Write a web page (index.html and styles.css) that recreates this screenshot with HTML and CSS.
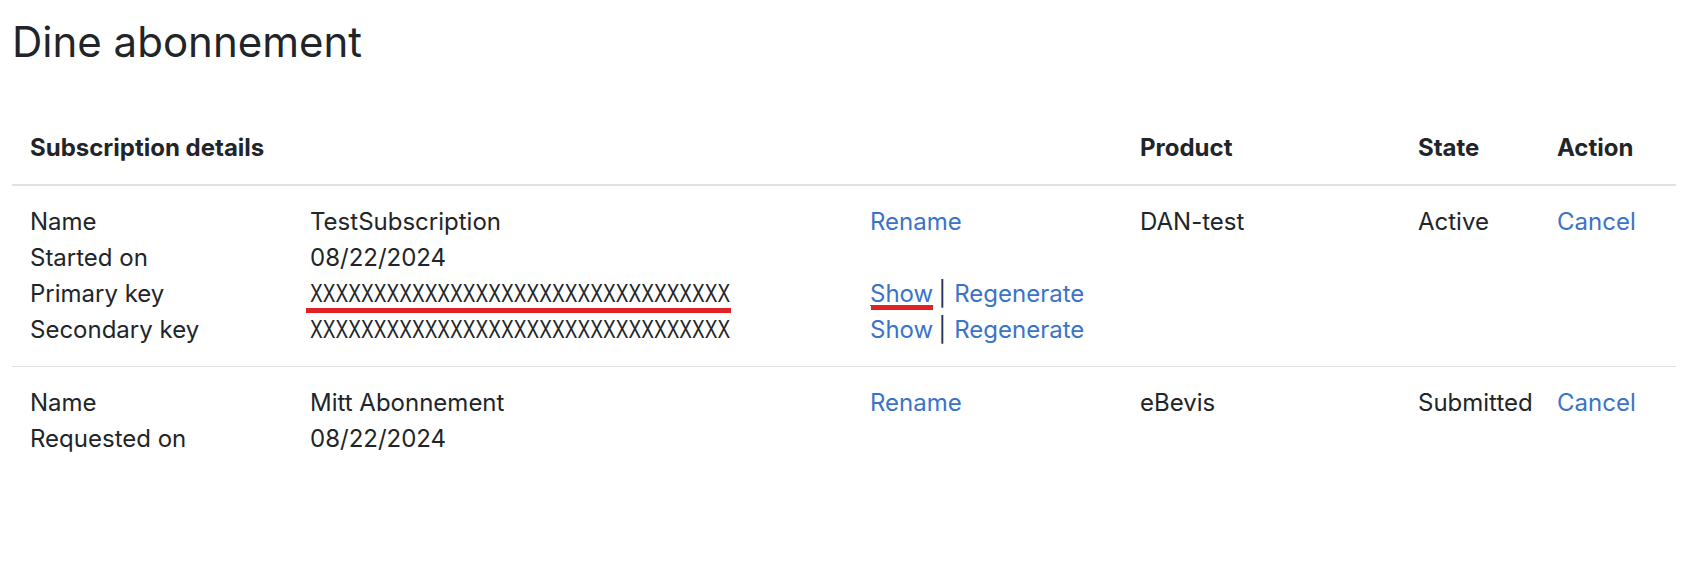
FILE: index.html
```html
<!DOCTYPE html>
<html lang="no">
<head>
<meta charset="utf-8">
<title>Dine abonnement</title>
<link rel="stylesheet" href="styles.css">
</head>
<body>
<main class="page">
  <h1 class="title">Dine abonnement</h1>
  <table class="subs">
    <colgroup>
      <col class="c-label">
      <col class="c-value">
      <col class="c-links">
      <col class="c-product">
      <col class="c-state">
      <col class="c-action">
    </colgroup>
    <thead>
      <tr>
        <th colspan="3">Subscription details</th>
        <th>Product</th>
        <th>State</th>
        <th>Action</th>
      </tr>
    </thead>
    <tbody>
      <tr>
        <td>
          <div class="line">Name</div>
          <div class="line">Started on</div>
          <div class="line">Primary key</div>
          <div class="line">Secondary key</div>
        </td>
        <td>
          <div class="line">TestSubscription</div>
          <div class="line">08/22/2024</div>
          <div class="line"><span class="key-wrap marked"><span class="key">XXXXXXXXXXXXXXXXXXXXXXXXXXXXXXXXX</span></span></div>
          <div class="line"><span class="key-wrap"><span class="key">XXXXXXXXXXXXXXXXXXXXXXXXXXXXXXXXX</span></span></div>
        </td>
        <td>
          <div class="line"><a class="link" href="#">Rename</a></div>
          <div class="line">&nbsp;</div>
          <div class="line"><a class="link hover marked-link" href="#">Show</a><span class="sep">|</span><a class="link" href="#">Regenerate</a></div>
          <div class="line"><a class="link" href="#">Show</a><span class="sep">|</span><a class="link" href="#">Regenerate</a></div>
        </td>
        <td><div class="line">DAN-test</div></td>
        <td><div class="line">Active</div></td>
        <td><div class="line"><a class="link" href="#">Cancel</a></div></td>
      </tr>
      <tr>
        <td>
          <div class="line">Name</div>
          <div class="line">Requested on</div>
        </td>
        <td>
          <div class="line">Mitt Abonnement</div>
          <div class="line">08/22/2024</div>
        </td>
        <td><div class="line"><a class="link" href="#">Rename</a></div></td>
        <td><div class="line">eBevis</div></td>
        <td><div class="line">Submitted</div></td>
        <td><div class="line"><a class="link" href="#">Cancel</a></div></td>
      </tr>
    </tbody>
  </table>
</main>
</body>
</html>
```

FILE: styles.css
```css
html, body {
  margin: 0;
  padding: 0;
  background: #ffffff;
}

body {
  font-family: Inter, "Noto Sans", "Liberation Sans", sans-serif;
  font-size: 24px;
  line-height: 36px;
  color: #212529;
}

.page {
  padding: 18px 25px 0 12px;
}

.title {
  margin: 0 0 46px 0;
  font-size: 42px;
  font-weight: 400;
  line-height: 48px;
  color: #212529;
}

.subs {
  width: 1664px;
  border-collapse: collapse;
  table-layout: fixed;
}

.c-label { width: 280px; }
.c-value { width: 560px; }
.c-links { width: 270px; }
.c-product { width: 278px; }
.c-state { width: 139px; }
.c-action { width: 137px; }

.subs th {
  text-align: left;
  font-weight: 700;
  padding: 18px;
  border-bottom: 2px solid #dee2e6;
  vertical-align: bottom;
}

.subs td {
  padding: 18px;
  vertical-align: top;
  border-top: 1px solid #dee2e6;
  white-space: nowrap;
}

.subs tbody tr:first-child td {
  border-top: 0;
}

.line {
  height: 36px;
}

.link {
  color: #3b73c8;
  text-decoration: none;
}

.link.hover {
  text-decoration: underline;
  text-decoration-thickness: 1px;
  text-underline-offset: 3px;
}

.sep {
  color: #2a3450;
  margin: 0 8px 0 5px;
}

.key-wrap {
  position: relative;
  display: inline-block;
  width: 421px;
  height: 36px;
  vertical-align: top;
}

.key {
  display: inline-block;
  transform: scaleX(0.778);
  transform-origin: left center;
}

.key-wrap.marked::after {
  content: "";
  position: absolute;
  left: -4px;
  right: 0;
  bottom: -1px;
  height: 5px;
  background: #e02226;
}

.marked-link {
  position: relative;
}

.marked-link::after {
  content: "";
  position: absolute;
  left: 1px;
  right: 0;
  bottom: -2px;
  height: 5px;
  background: #e02226;
}
```
